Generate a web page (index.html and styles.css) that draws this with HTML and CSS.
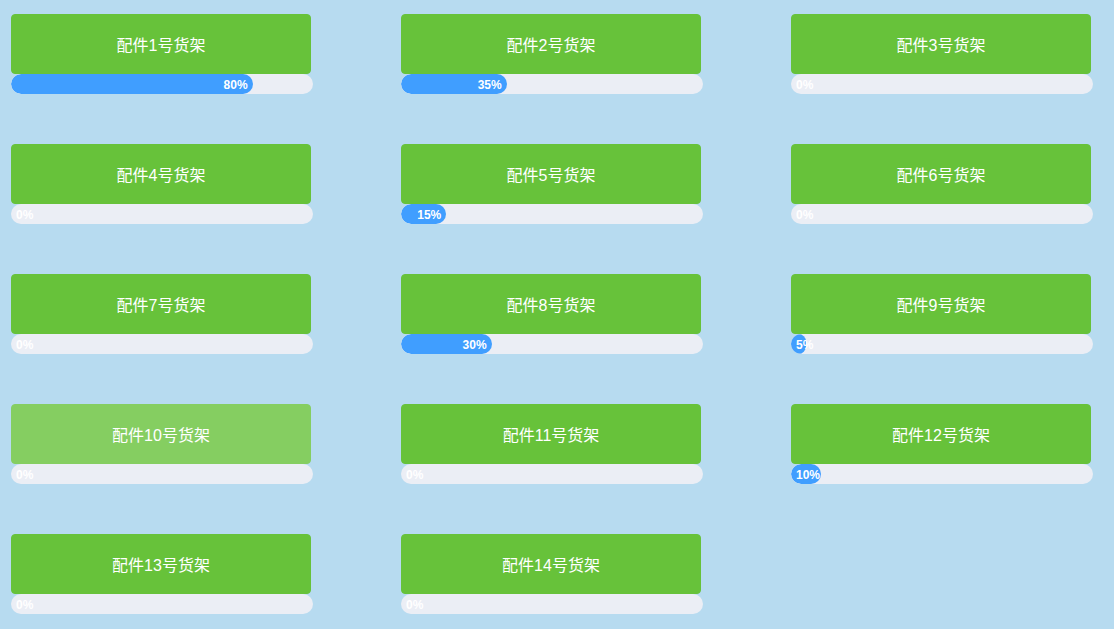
FILE: index.html
```html
<!DOCTYPE html>
<html lang="zh">
<head>
<meta charset="utf-8">
<link rel="stylesheet" href="styles.css">
</head>
<body>
<div class="grid">
  <div class="item"><div class="btn">配件1号货架</div><div class="bar"><div class="fill" style="width:80%"><span class="txt">80%</span></div></div></div>
  <div class="item"><div class="btn">配件2号货架</div><div class="bar"><div class="fill" style="width:35%"><span class="txt">35%</span></div></div></div>
  <div class="item"><div class="btn">配件3号货架</div><div class="bar"><div class="fill" style="width:0%"><span class="txt">0%</span></div></div></div>
  <div class="item"><div class="btn">配件4号货架</div><div class="bar"><div class="fill" style="width:0%"><span class="txt">0%</span></div></div></div>
  <div class="item"><div class="btn">配件5号货架</div><div class="bar"><div class="fill" style="width:15%"><span class="txt">15%</span></div></div></div>
  <div class="item"><div class="btn">配件6号货架</div><div class="bar"><div class="fill" style="width:0%"><span class="txt">0%</span></div></div></div>
  <div class="item"><div class="btn">配件7号货架</div><div class="bar"><div class="fill" style="width:0%"><span class="txt">0%</span></div></div></div>
  <div class="item"><div class="btn">配件8号货架</div><div class="bar"><div class="fill" style="width:30%"><span class="txt">30%</span></div></div></div>
  <div class="item"><div class="btn">配件9号货架</div><div class="bar"><div class="fill" style="width:5%"><span class="txt">5%</span></div></div></div>
  <div class="item"><div class="btn btn-light">配件10号货架</div><div class="bar"><div class="fill" style="width:0%"><span class="txt">0%</span></div></div></div>
  <div class="item"><div class="btn">配件11号货架</div><div class="bar"><div class="fill" style="width:0%"><span class="txt">0%</span></div></div></div>
  <div class="item"><div class="btn">配件12号货架</div><div class="bar"><div class="fill" style="width:10%"><span class="txt">10%</span></div></div></div>
  <div class="item"><div class="btn">配件13号货架</div><div class="bar"><div class="fill" style="width:0%"><span class="txt">0%</span></div></div></div>
  <div class="item"><div class="btn">配件14号货架</div><div class="bar"><div class="fill" style="width:0%"><span class="txt">0%</span></div></div></div>
</div>
</body>
</html>
```
FILE: styles.css
```css
html, body {
  margin: 0;
  padding: 0;
  background: #b7dbf0;
}
body {
  font-family: "Liberation Sans", "Noto Sans CJK SC", sans-serif;
}
.grid {
  display: grid;
  grid-template-columns: repeat(3, 302px);
  column-gap: 88px;
  row-gap: 50px;
  padding: 14px 0 0 11px;
}
.item {
  display: flex;
  flex-direction: column;
  width: 302px;
}
.btn {
  width: 300px;
  height: 60px;
  box-sizing: border-box;
  background: #67c23a;
  border: 1px solid #67c23a;
  border-radius: 4px;
  color: #fff;
  font-size: 16px;
  display: flex;
  align-items: center;
  justify-content: center;
}
.btn-light {
  background: #85ce61;
  border-color: #85ce61;
}
.bar {
  height: 20px;
  width: 302px;
  background: #ebeef5;
  border-radius: 100px;
  overflow: hidden;
  position: relative;
}
.fill {
  height: 100%;
  background: #409eff;
  border-radius: 100px;
  text-align: right;
  line-height: 20px;
  white-space: nowrap;
}
.txt {
  display: inline-block;
  vertical-align: middle;
  color: #fff;
  font-size: 12px;
  font-weight: bold;
  margin: 0 5px;
  line-height: 20px;
}
```
